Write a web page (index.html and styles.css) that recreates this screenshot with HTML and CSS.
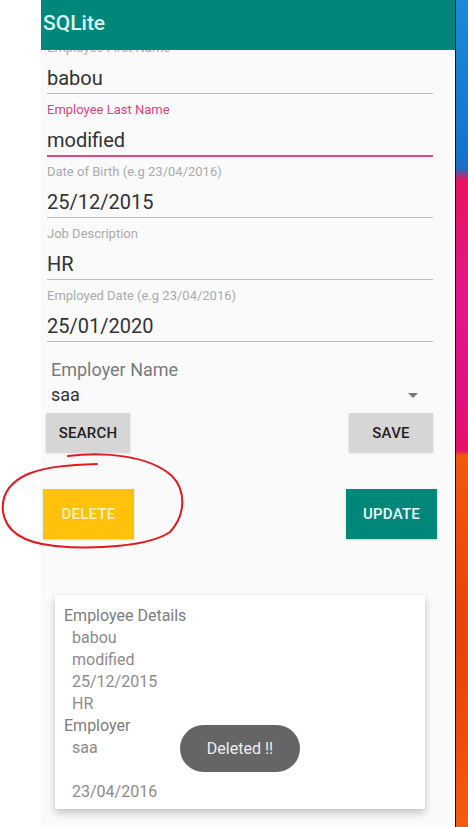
FILE: index.html
```html
<!DOCTYPE html>
<html lang="en">
<head>
<meta charset="utf-8">
<title>SQLite</title>
<link rel="stylesheet" href="styles.css">
</head>
<body>
<div class="screen">
  <div class="gutter"></div>
  <div class="app">
    <header class="appbar">SQLite</header>
    <main class="content">
      <div class="form">
        <div class="field">
          <div class="field-label">Employee First Name</div>
          <div class="field-value">babou</div>
          <div class="field-line"></div>
        </div>
        <div class="field focused">
          <div class="field-label">Employee Last Name</div>
          <div class="field-value">modified</div>
          <div class="field-line"></div>
        </div>
        <div class="field">
          <div class="field-label">Date of Birth (e.g 23/04/2016)</div>
          <div class="field-value">25/12/2015</div>
          <div class="field-line"></div>
        </div>
        <div class="field">
          <div class="field-label">Job Description</div>
          <div class="field-value">HR</div>
          <div class="field-line"></div>
        </div>
        <div class="field">
          <div class="field-label">Employed Date (e.g 23/04/2016)</div>
          <div class="field-value">25/01/2020</div>
          <div class="field-line"></div>
        </div>

        <div class="spinner">
          <div class="spinner-label">Employer Name</div>
          <div class="spinner-row">
            <span class="spinner-value">saa</span>
            <span class="spinner-arrow"></span>
          </div>
        </div>

        <div class="btn-row small">
          <button class="btn gray">SEARCH</button>
          <button class="btn gray">SAVE</button>
        </div>

        <div class="btn-row big">
          <button class="btn yellow">DELETE</button>
          <button class="btn teal">UPDATE</button>
        </div>

        <div class="card">
          <div class="card-title">Employee Details</div>
          <div class="card-item">babou</div>
          <div class="card-item">modified</div>
          <div class="card-item">25/12/2015</div>
          <div class="card-item">HR</div>
          <div class="card-title">Employer</div>
          <div class="card-item">saa</div>
          <div class="card-item empty">&nbsp;</div>
          <div class="card-item">23/04/2016</div>
        </div>
      </div>
    </main>
  </div>
  <div class="divider"></div>
  <div class="wallpaper"></div>

  <div class="toast">Deleted !!</div>

  <svg class="scribble" viewBox="0 0 468 827" width="468" height="827" aria-hidden="true">
    <path d="M68,456 C105,451 150,456 172,476 C186,490 186,515 170,532 C150,546 95,550 55,546 C25,543 6,532 3,512 C1,494 10,482 28,474 C48,466 72,465 97,464" fill="none" stroke="#e3191f" stroke-width="2" stroke-linecap="round"/>
  </svg>
</div>
</body>
</html>
```

FILE: styles.css
```css
* {
  box-sizing: border-box;
  margin: 0;
  padding: 0;
}

html, body {
  height: 100%;
}

body {
  background: #ffffff;
  font-family: Roboto, "Noto Sans", "Liberation Sans", sans-serif;
  overflow: hidden;
}

.screen {
  position: relative;
  display: flex;
  width: 468px;
  height: 827px;
}

.gutter {
  flex: none;
  width: 41px;
  background: #ffffff;
}

.app {
  flex: none;
  width: 414px;
  height: 827px;
  background: #fafafa;
  display: flex;
  flex-direction: column;
  overflow: hidden;
}

.appbar {
  flex: none;
  height: 50px;
  background: #01877a;
  color: #d8f6ef;
  font-size: 21px;
  font-weight: 500;
  line-height: 46px;
  padding-left: 2px;
  position: relative;
  z-index: 1;
}

.content {
  flex: 1;
  overflow: hidden;
}

.form {
  margin-top: -12px;
}

.field {
  padding: 0 22px 0 6px;
  margin-bottom: 6px;
}

.field-label {
  font-size: 13px;
  line-height: 16px;
  padding-top: 2px;
  height: 18px;
  color: #ababab;
}

.field-value {
  font-size: 20px;
  line-height: 28px;
  color: #333333;
  margin-top: 8px;
}

.field-line {
  height: 1px;
  margin-top: 1px;
  background: #bdbdbd;
}

.field.focused {
  margin-bottom: 5px;
}

.field.focused .field-label {
  color: #d6447e;
}

.field.focused .field-line {
  height: 2px;
  background: #dd4a83;
}

.spinner {
  padding: 11px 37px 0 10px;
}

.spinner-label {
  font-size: 18px;
  line-height: 22px;
  color: #7a7a7a;
}

.spinner-row {
  display: flex;
  justify-content: space-between;
  align-items: center;
  margin-top: 3px;
}

.spinner-value {
  font-size: 18px;
  line-height: 22px;
  color: #333333;
}

.spinner-arrow {
  width: 0;
  height: 0;
  border-left: 5px solid transparent;
  border-right: 5px solid transparent;
  border-top: 5px solid #777777;
}

.btn-row {
  display: flex;
  justify-content: space-between;
}

.btn-row.small {
  padding: 7px 22px 0 5px;
}

.btn-row.big {
  margin-top: 37px;
  padding: 0 18px 0 2px;
}

.btn {
  border: none;
  font-family: Roboto, "Noto Sans", "Liberation Sans", sans-serif;
  font-size: 15px;
  font-weight: 500;
  display: flex;
  align-items: center;
  justify-content: center;
  letter-spacing: 0.2px;
}

.btn.gray {
  width: 84px;
  height: 39px;
  background: #d6d6d6;
  color: #1f1f1f;
  box-shadow: 0 1px 2px rgba(0, 0, 0, 0.18);
}

.btn.yellow {
  width: 91px;
  height: 50px;
  background: #fec20b;
  color: #fdf0c0;
  box-shadow: 0 1px 2px rgba(0, 0, 0, 0.15);
}

.btn.teal {
  width: 91px;
  height: 50px;
  background: #01877a;
  color: #eafaf7;
  box-shadow: 0 1px 2px rgba(0, 0, 0, 0.2);
}

.card {
  margin: 56px 30px 0 14px;
  background: #ffffff;
  padding: 10px 9px 6px;
  box-shadow: 0 4px 8px rgba(0, 0, 0, 0.22), 0 0 2px rgba(0, 0, 0, 0.06);
}

.card-title {
  font-size: 16px;
  line-height: 22px;
  color: #7d7d7d;
}

.card-item {
  font-size: 16px;
  line-height: 22px;
  color: #8c8c8c;
  padding-left: 8px;
}

.divider {
  flex: none;
  width: 1px;
  background: #151515;
}

.wallpaper {
  flex: none;
  width: 12px;
  background: linear-gradient(to bottom,
    #1b8ad9 0,
    #1574cc 150px,
    #1a6ec4 168px,
    #e8145e 180px,
    #e3168c 300px,
    #e21080 400px,
    #e5106a 450px,
    #f25a0c 456px,
    #e9420c 620px,
    #ee4a0a 720px,
    #f35c10 827px);
}

.toast {
  position: absolute;
  left: 180px;
  top: 725px;
  width: 120px;
  height: 47px;
  border-radius: 24px;
  background: #656565;
  color: #eeeeee;
  font-size: 16px;
  display: flex;
  align-items: center;
  justify-content: center;
}

.scribble {
  position: absolute;
  left: 0;
  top: 0;
  pointer-events: none;
}
```
